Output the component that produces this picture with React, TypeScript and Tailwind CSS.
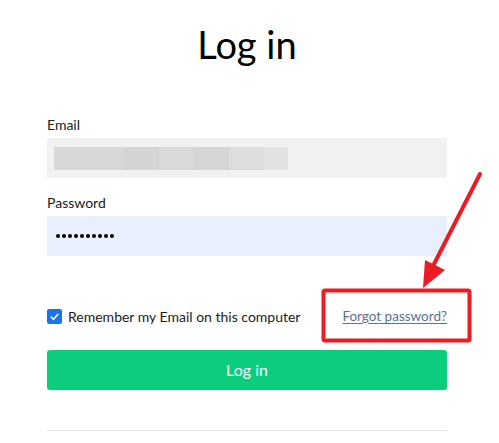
import React, { useState } from "react";

const blurBlocks = [
  "bg-[#d9d8d8]",
  "bg-[#d7d7d6]",
  "bg-[#d3d4d5]",
  "bg-[#d9d9d7]",
  "bg-[#d5d5d4]",
  "bg-[#dcdddc]",
  "bg-[#e2e2e1]",
];

const App = () => {
  const [remember, setRemember] = useState<boolean>(true);

  return (
    <div className="relative w-[499px] h-[443px] bg-white overflow-hidden font-['Lato',sans-serif] text-[#1b1b1b]">
      <div className="w-[400px] ml-[47px] pt-[18px]">
        <h1 className="text-center text-[38px] leading-[52px] text-black">Log in</h1>

        <div className="mt-[45px]">
          <label className="block text-[14px] leading-[20px]">Email</label>
          <div className="mt-[3px] h-[40px] bg-[#f1f1f1] flex items-center pl-[7px]">
            <div className="flex h-[23px]">
              {blurBlocks.map((c, i) => (
                <div key={i} className={`${c} h-full ${i === 6 ? "w-[24px]" : "w-[35px]"}`} />
              ))}
            </div>
          </div>
        </div>

        <div className="mt-[15px]">
          <label className="block text-[14px] leading-[20px]">Password</label>
          <div className="mt-[3px] h-[40px] bg-[#e8f0fe] flex items-center pl-[9px] gap-[2px]">
            {Array.from({ length: 10 }).map((_, i) => (
              <span key={i} className="w-[4px] h-[4px] rounded-full bg-black" />
            ))}
          </div>
        </div>

        <div className="mt-[45px] flex items-center justify-between h-[30px]">
          <label className="flex items-center gap-[6px] text-[14px]">
            <button
              type="button"
              onClick={() => setRemember(!remember)}
              className="w-[15px] h-[15px] rounded-[2px] bg-[#1a73e8] flex items-center justify-center"
            >
              {remember && (
                <svg width="11" height="11" viewBox="0 0 12 12" fill="none">
                  <path d="M2 6.2 L4.8 9 L10 3.2" stroke="white" strokeWidth="1.8" />
                </svg>
              )}
            </button>
            Remember my Email on this computer
          </label>
          <a href="#" className="text-[13.5px] text-[#5c7193] underline underline-offset-2">
            Forgot password?
          </a>
        </div>

        <button className="mt-[19px] w-full h-[40px] rounded-[3px] bg-[#0ccd7e] text-white text-[16px]">
          Log in
        </button>

        <div className="mt-[40px] h-px bg-[#e4e4e4]" />
      </div>

      <svg className="absolute left-0 top-0 pointer-events-none" width="499" height="443">
        <rect x="323.5" y="290.5" width="146" height="50" rx="1.5" fill="none" stroke="#ec1c24" strokeWidth="4" />
        <line x1="480" y1="174" x2="433" y2="266" stroke="#ec1c24" strokeWidth="4" strokeLinecap="round" />
        <polygon points="423,288 425,260 445,270" fill="#ec1c24" />
      </svg>
    </div>
  );
};

export default App;
